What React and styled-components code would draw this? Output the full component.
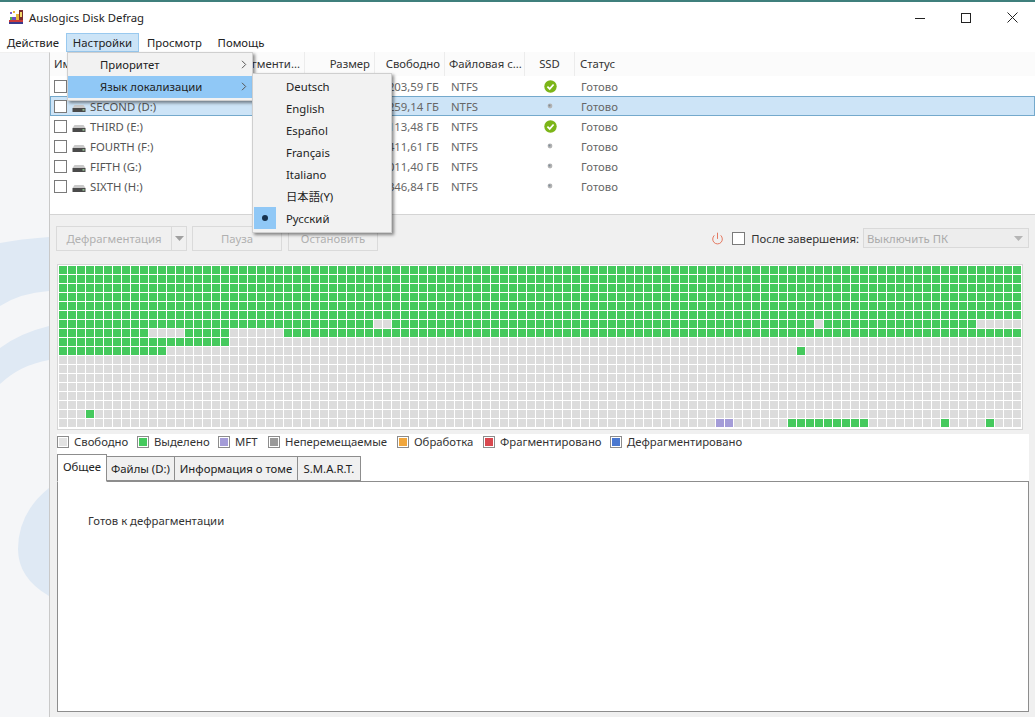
import React from 'react';
import styled, { createGlobalStyle } from 'styled-components';
import { Power } from 'lucide-react';

const Global = createGlobalStyle`
  html, body { margin: 0; padding: 0; background: #fff; }
  #root { width: 1035px; height: 717px; overflow: hidden; }
  * { box-sizing: border-box; }
`;

const Window = styled.div`
  position: relative; width: 1035px; height: 717px; display: flex; flex-direction: column;
  border-top: 2px solid #3f7f7c; background: #fff; overflow: hidden;
  font-family: "Noto Sans", "Open Sans", sans-serif; font-size: 11.33px; color: #333;
  & > * { flex-shrink: 0; }
`;
const TitleBar = styled.div`
  height: 31px; display: flex; align-items: center; padding: 0 0 0 8px; color: #222; gap: 5px;
`;
const TitleText = styled.span` flex: 1; `;
const WinButtons = styled.div` display: flex; `;
const WinButton = styled.div` width: 46px; height: 29px; display: flex; align-items: center; justify-content: center; `;
const MenuBar = styled.div` height: 19px; display: flex; `;
const MenuItem = styled.div`
  padding: 0 5px; width: ${p => p.$w}px; line-height: 17px; color: #222; white-space: nowrap; text-align: center;
  border: 1px solid ${p => p.$open ? '#99c9ef' : 'transparent'}; background: ${p => p.$open ? '#cce4f7' : 'transparent'};
  margin-right: ${p => p.$mr || 0}px;
`;
const Body = styled.div` flex: 1; display: flex; min-height: 0; `;
const Sidebar = styled.div`
  width: 50px; background: #f5f6f8; border-right: 1px solid #c9c9c9; border-top: 1px solid #f0f0f0;
`;
const SideArt = styled.svg` display: block; width: 49px; height: 665px; `;
const Main = styled.div` flex: 1; display: flex; flex-direction: column; background: #f0f0f0; min-width: 0; `;
const DriveTable = styled.div` height: 163px; background: #fff; border-bottom: 1px solid #d4d4d4; `;
const HeaderRow = styled.div` height: 24px; display: flex; align-items: center; background: #fbfbfb; color: #333; `;
const Th = styled.div`
  width: ${p => p.$w}px; flex: ${p => p.$w ? 'none' : 1}; height: 24px; line-height: 24px; padding: ${p => p.$pad || '0 4px'};
  text-align: ${p => p.$align || 'left'}; white-space: nowrap; overflow: hidden;
  border-right: ${p => p.$w ? '1px solid #ececec' : 'none'};
`;
const Row = styled.div`
  height: 20px; display: flex; align-items: center; color: #666;
  background: ${p => p.$sel ? '#cde4f7' : 'transparent'};
  box-shadow: ${p => p.$sel ? 'inset 0 0 0 1px #74a9cc' : 'none'};
`;
const Td = styled.div`
  width: ${p => p.$w}px; flex: ${p => p.$w ? 'none' : 1}; padding: ${p => p.$pad || '0 4px'};
  text-align: ${p => p.$align || 'left'}; white-space: nowrap; overflow: hidden; display: ${p => p.$flex ? 'flex' : 'block'};
  align-items: center; justify-content: ${p => p.$center ? 'center' : 'flex-start'};
`;
const CheckBox = styled.span`
  display: inline-block; width: 13px; height: 13px; border: 1px solid #7a7a7a; background: #fff; flex: none;
  margin-top: ${p => p.$mt || 0}px;
`;
const DriveSvg = styled.svg` margin: 5px 0 0 5px; flex: none; `;
const DriveName = styled.span` margin-left: 4px; color: #555; `;
const Toolbar = styled.div` height: 49px; display: flex; align-items: center; padding: 0 6px 3px 6px; color: #ababab; `;
const Btn = styled.div`
  width: ${p => p.$w}px; height: 25px; border: 1px solid #dadada; background: #f0f0f0; text-align: center; line-height: 23px;
  border-left-width: ${p => p.$joined ? 0 : 1}px;
  display: flex; align-items: center; justify-content: center; margin-right: ${p => p.$mr || 0}px; white-space: nowrap; color: #b0b0b0;
`;
const Spacer = styled.div` flex: 1; `;
const FinishLabel = styled.span` color: #333; margin: 0 4px 0 6px; white-space: nowrap; `;
const FinishSelect = styled.div`
  width: 166px; height: 20px; border: 1px solid #d9d9d9; background: #ededed; display: flex; align-items: center;
  justify-content: space-between; padding: 0 5px 0 3px; color: #aaa;
`;
const PowerWrap = styled.span` display: flex; margin-right: 8px; color: #e2664a; `;
const MapFrame = styled.div`
  width: 966px; height: 166px; margin-left: 7px; border: 1px solid #d6d6d6; background: #fff; padding: 1px 0 0 0;
`;
const MapGrid = styled.div`
  display: grid; grid-template-columns: repeat(107, 8px); grid-auto-rows: 8px; gap: 1px; margin-left: 1px;
`;
const Cell = styled.div` background: ${p => p.$c}; `;
const Lower = styled.div`
  flex: 1; margin: 4px 6px 5px 7px; background: #fff; display: flex; flex-direction: column; min-height: 0; width: 972px;
`;
const Legend = styled.div` height: 15px; display: flex; align-items: center; color: #333; white-space: nowrap; `;
const LegendItem = styled.div` width: ${p => p.$w}px; display: flex; align-items: center; gap: 5px; `;
const Swatch = styled.span`
  width: 12px; height: 12px; flex: none; background: ${p => p.$c}; border: 1px solid #8c8c8c; box-shadow: inset 0 0 0 1px #fff;
`;
const Tabs = styled.div` height: 32px; display: flex; align-items: flex-end; `;
const Tab = styled.div`
  width: ${p => p.$w}px; height: ${p => p.$on ? 28 : 25}px; margin-bottom: ${p => p.$on ? -1 : 0}px; text-align: center; white-space: nowrap;
  line-height: 23px; color: #222; position: relative; z-index: ${p => p.$on ? 1 : 0};
  background: ${p => p.$on ? '#fff' : '#f0f0f0'}; border: 1px solid #8d8d8d; border-left-width: ${p => p.$on ? 1 : 0}px;
  border-bottom-color: ${p => p.$on ? '#fff' : '#8d8d8d'};
`;
const TabPanel = styled.div`
  flex: 1; width: 972px; border: 1px solid #8d8d8d; background: #fff; padding: 31px 30px; color: #333;
`;
const Dropdown = styled.div`
  position: absolute; background: #f2f2f2; border: 1px solid #cfcfcf; box-shadow: 2px 2px 3px rgba(0,0,0,.45);
  left: ${p => p.$x}px; top: ${p => p.$y}px; width: ${p => p.$w}px; padding: ${p => p.$pad};
  z-index: 5; color: #222;
`;
const DItem = styled.div`
  height: 22px; display: flex; align-items: center; padding: 0 5px 2px 32px; justify-content: space-between;
  background: ${p => p.$on ? '#90c8f6' : 'transparent'};
`;
const SubItem = styled.div` height: 22px; display: flex; align-items: center; `;
const Gutter = styled.span`
  width: 22px; height: 22px; margin-right: 10px; display: flex; align-items: center; justify-content: center;
  background: ${p => p.$on ? '#90c8f6' : 'transparent'}; flex: none;
`;
const Bullet = styled.span` width: 6px; height: 6px; border-radius: 50%; background: #17324d; `;
const CjkLabel = styled.span` font-family: "Noto Sans", "Noto Sans CJK JP", sans-serif; `;

const Logo = () => (
  <svg width="16" height="15" viewBox="0 0 16 15">
    <rect x="11" y="0" width="4" height="14" fill="#7a2c2c"/>
    <rect x="8" y="4" width="3" height="6" fill="#e8b93c"/>
    <rect x="4" y="7" width="4" height="3" fill="#6a4fc4"/>
    <rect x="1" y="10" width="14" height="2" fill="#c93a3a"/>
    <rect x="1" y="12" width="14" height="2" fill="#3a3a8c"/>
    <rect x="2" y="2" width="2" height="2" fill="#7a5fd0"/>
    <rect x="5" y="1" width="2" height="2" fill="#e8b93c"/>
    <rect x="2" y="7" width="2" height="3" fill="#4caf50"/>
    <rect x="12" y="2" width="2" height="5" fill="#f2d96b"/>
  </svg>
);
const DriveIcon = () => (
  <DriveSvg width="14" height="7" viewBox="0 0 14 7">
    <path d="M2.5 0h9L13.5 3h-13z" fill="#c9c9c9"/>
    <rect x="0.5" y="3" width="13" height="4" fill="#4a4a4a"/>
    <rect x="10.5" y="4.2" width="2" height="1.4" fill="#9fd49f"/>
  </DriveSvg>
);
const SsdCheck = () => (
  <svg width="13" height="13" viewBox="0 0 13 13">
    <circle cx="6.5" cy="6.5" r="6.2" fill="#7cb518"/>
    <path d="M3.4 6.6l2.3 2.3 3.9-4.4" fill="none" stroke="#fff" strokeWidth="1.7"/>
  </svg>
);
const SsdDot = () => (
  <svg width="6" height="6" viewBox="0 0 6 6">
    <circle cx="3" cy="3" r="2.4" fill="#b4b4b4"/><circle cx="2.5" cy="2.5" r="1" fill="#7d8c99"/>
  </svg>
);
const Chevron = () => (
  <svg width="6" height="9" viewBox="0 0 6 9"><path d="M1 0.8l3.7 3.7L1 8.2" fill="none" stroke="#555" strokeWidth="1"/></svg>
);
const Caret = ({ color }) => (
  <svg width="9" height="5" viewBox="0 0 9 5"><path d="M0 0h9L4.5 5z" fill={color}/></svg>
);

const COLS = { name: 175, frag: 80, size: 70, free: 70, fs: 80, ssd: 50 };
const drives = [
  ['', '1 203,59 ГБ', true],
  ['SECOND (D:)', '1 259,14 ГБ', false],
  ['THIRD (E:)', '1 113,48 ГБ', true],
  ['FOURTH (F:)', '1 411,61 ГБ', false],
  ['FIFTH (G:)', '1 011,40 ГБ', false],
  ['SIXTH (H:)', '1 346,84 ГБ', false],
];

const G = '#45c95d', E = '#dcdcdc', P = '#a49cd8';
const cellColor = (r, c) => {
  if (r <= 5) return G;
  if (r === 6) return (c === 35 || c === 36 || c === 84 || c >= 102) ? E : G;
  if (r === 7) return (c >= 10 && c <= 13) || (c >= 19 && c <= 24) ? E : G;
  if (r === 8) return c <= 18 ? G : E;
  if (r === 9) return c <= 11 || c === 82 ? G : E;
  if (r === 16) return c === 3 ? G : E;
  if (r === 17) {
    if (c === 73 || c === 74) return P;
    if ((c >= 81 && c <= 89) || c === 98 || c === 103) return G;
  }
  return E;
};
const cells = [];
for (let r = 0; r < 18; r++) for (let c = 0; c < 107; c++) cells.push(cellColor(r, c));

const legend = [
  ['Свободно', '#e2e2e2', 80], ['Выделено', '#45c95d', 81], ['MFT', '#a49cd8', 50], ['Неперемещаемые', '#9a9a9a', 129],
  ['Обработка', '#f0a63c', 86], ['Фрагментировано', '#d9484f', 127], ['Дефрагментировано', '#4a78d0', 150],
];
const langs = ['Deutsch', 'English', 'Español', 'Français', 'Italiano'];

export default function App() {
  return (
    <Window>
      <Global />
      <TitleBar>
        <Logo />
        <TitleText>Auslogics Disk Defrag</TitleText>
        <WinButtons>
          <WinButton><svg width="10" height="10" viewBox="0 0 10 10"><path d="M0 5.5h10" stroke="#222" strokeWidth="1"/></svg></WinButton>
          <WinButton><svg width="10" height="10" viewBox="0 0 10 10"><rect x=".5" y=".5" width="9" height="9" fill="none" stroke="#222"/></svg></WinButton>
          <WinButton><svg width="11" height="11" viewBox="0 0 11 11"><path d="M.5.5l10 10M10.5.5l-10 10" stroke="#222" strokeWidth="1"/></svg></WinButton>
        </WinButtons>
      </TitleBar>
      <MenuBar>
        <MenuItem $w={66}>Действие</MenuItem>
        <MenuItem $w={73} $open>Настройки</MenuItem>
        <MenuItem $w={71} $mr={1}>Просмотр</MenuItem>
        <MenuItem $w={60}>Помощь</MenuItem>
      </MenuBar>
      <Body>
        <Sidebar>
          <SideArt viewBox="0 0 49 665">
            <path d="M0 190Q20 186 49 184V238Q20 240 0 253Z" fill="#dfe9f4"/>
            <path d="M0 295Q20 280 49 273V307Q20 312 0 331Z" fill="#dfe9f4"/>
            <path d="M49 435Q18 460 18 496Q18 525 49 543Z" fill="#dfe9f4"/>
          </SideArt>
        </Sidebar>
        <Main>
          <DriveTable>
            <HeaderRow>
              <Th $w={COLS.name}>Имя</Th>
              <Th $w={COLS.frag} $align="right">Фрагменти...</Th>
              <Th $w={COLS.size} $align="right">Размер</Th>
              <Th $w={COLS.free} $align="right">Свободно</Th>
              <Th $w={COLS.fs} $pad="0 0 0 4px">Файловая с...</Th>
              <Th $w={COLS.ssd} $align="center">SSD</Th>
              <Th $pad="0 5px">Статус</Th>
            </HeaderRow>
            {drives.map(([name, free, ssd], i) => (
              <Row key={free} $sel={i === 1}>
                <Td $w={COLS.name} $flex>
                  <CheckBox $mt={1} /><DriveIcon /><DriveName>{name}</DriveName>
                </Td>
                <Td $w={COLS.frag} />
                <Td $w={COLS.size} />
                <Td $w={COLS.free} $align="right" $pad="0 6px 0 0">{free}</Td>
                <Td $w={COLS.fs} $pad="0 0 0 6px">NTFS</Td>
                <Td $w={COLS.ssd} $flex $center>{ssd ? <SsdCheck /> : <SsdDot />}</Td>
                <Td $pad="0 6px">Готово</Td>
              </Row>
            ))}
          </DriveTable>
          <Toolbar>
            <Btn $w={116}>Дефрагментация</Btn>
            <Btn $w={15} $mr={5} $joined><Caret color="#a0a0a0" /></Btn>
            <Btn $w={90} $mr={6}>Пауза</Btn>
            <Btn $w={90}>Остановить</Btn>
            <Spacer />
            <PowerWrap><Power size={13} strokeWidth={1.6} /></PowerWrap>
            <CheckBox />
            <FinishLabel>После завершения:</FinishLabel>
            <FinishSelect>Выключить ПК <Caret color="#b5b5b5" /></FinishSelect>
          </Toolbar>
          <MapFrame>
            <MapGrid>
              {cells.map((c, i) => <Cell key={i} $c={c} />)}
            </MapGrid>
          </MapFrame>
          <Lower>
            <Legend>
              {legend.map(([t, c, w]) => (
                <LegendItem key={t} $w={w}><Swatch $c={c} />{t}</LegendItem>
              ))}
            </Legend>
            <Tabs>
              <Tab $w={50} $on>Общее</Tab>
              <Tab $w={68}>Файлы (D:)</Tab>
              <Tab $w={123}>Информация о томе</Tab>
              <Tab $w={63}>S.M.A.R.T.</Tab>
            </Tabs>
            <TabPanel>Готов к дефрагментации</TabPanel>
          </Lower>
        </Main>
      </Body>
      <Dropdown $x={67} $y={50} $w={186} $pad="1px 0 2px 0">
        <DItem>Приоритет <Chevron /></DItem>
        <DItem $on>Язык локализации <Chevron /></DItem>
      </Dropdown>
      <Dropdown $x={252} $y={71} $w={140} $pad="1px 0 3px 1px">
        {langs.map(l => <SubItem key={l}><Gutter />{l}</SubItem>)}
        <SubItem><Gutter /><CjkLabel>日本語(Y)</CjkLabel></SubItem>
        <SubItem><Gutter $on><Bullet /></Gutter>Русский</SubItem>
      </Dropdown>
    </Window>
  );
}
